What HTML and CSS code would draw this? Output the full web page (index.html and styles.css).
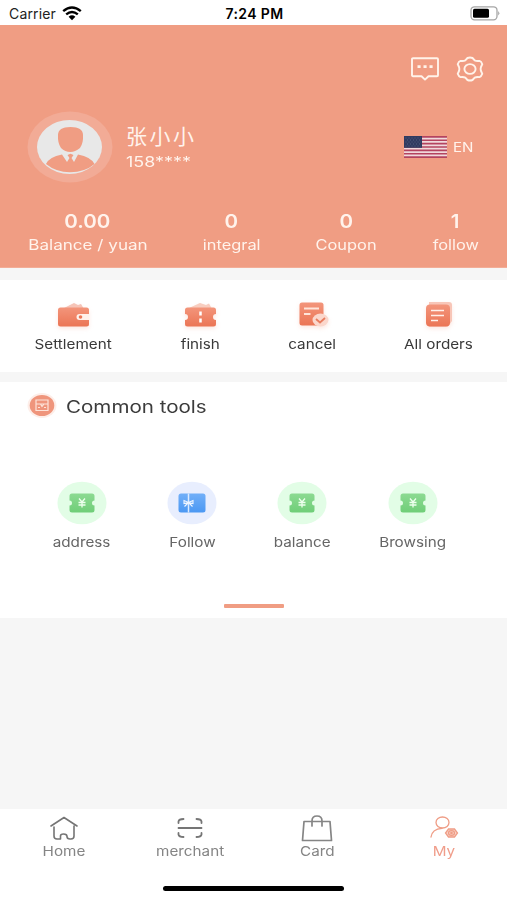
FILE: index.html
```html
<!DOCTYPE html>
<html lang="en">
<head>
<meta charset="utf-8">
<title>My</title>
<link rel="stylesheet" href="styles.css">
</head>
<body>
<svg class="defs" width="0" height="0" aria-hidden="true">
  <defs>
    <linearGradient id="coral" x1="0" y1="0" x2="0" y2="1"><stop offset="0" stop-color="#f3957b"/><stop offset="1" stop-color="#eb7555"/></linearGradient>
    <linearGradient id="green" x1="0" y1="0" x2="0" y2="1"><stop offset="0" stop-color="#8cda92"/><stop offset="1" stop-color="#6fce78"/></linearGradient>
    <linearGradient id="blue" x1="0" y1="0" x2="0" y2="1"><stop offset="0" stop-color="#71aff8"/><stop offset="1" stop-color="#4b98f3"/></linearGradient>
    <symbol id="coupon" viewBox="0 0 50 44">
      <ellipse cx="25" cy="22" rx="24.500" ry="21.300" fill="#e2fde6"/>
      <path d="M15 12.500H35Q37.500 12.500 37.500 15V19.500A2.500 2.500 0 0 0 37.500 24.500V29Q37.500 31.500 35 31.500H15Q12.500 31.500 12.500 29V24.500A2.500 2.500 0 0 0 12.500 19.500V15Q12.500 12.500 15 12.500Z" fill="url(#green)"/>
      <path d="M22 17.500L25 21L28 17.500M25 21V26.500M21.500 21.500H28.500M21.500 24H28.500" fill="none" stroke="#edffed" stroke-width="1.300"/>
    </symbol>
  </defs>
</svg>
<div class="screen">
  <div class="status">
    <div class="carrier"><span class="carrier-name">Carrier</span>
      <svg width="20" height="15" viewBox="0 0 20 15"><g fill="none" stroke="#000" stroke-width="2.500"><path d="M1.200 5.100Q10 -2.100 18.800 5.100"/><path d="M4.200 8.400Q10 3.700 15.800 8.400"/></g><path d="M6.600 10.700Q10 8 13.400 10.700L10 14.200Z"/></svg>
    </div>
    <span class="clock">7:24 PM</span>
    <svg class="battery" width="31" height="15" viewBox="0 0 31 15"><rect x="2" y=".8" width="26" height="13" rx="3.500" fill="#fff" stroke="#a5a5a5" stroke-width="1.300"/><rect x="4" y="2.800" width="16" height="9" rx="1.500"/><path d="M29.200 5Q31.500 7.300 29.200 9.500Z" fill="#a5a5a5"/></svg>
  </div>

  <header class="hero">
    <div class="actions">
      <svg width="28" height="24" viewBox="0 0 28 24" fill="none" stroke="#fff3ea" stroke-width="1.900" stroke-linejoin="round"><path d="M2 1.200H26Q27 1.200 27 2.200V18.200Q27 19.200 26 19.200H17.500L14 22.600L10.500 19.200H2Q1 19.200 1 18.200V2.200Q1 1.200 2 1.200Z"/><path d="M6.500 9.700H9.600M12.500 9.700H15.600M18.500 9.700H21.600" stroke-width="2.700"/></svg>
      <svg width="28" height="26" viewBox="0 0 28 26" fill="none" stroke="#fff3ea" stroke-width="1.900" stroke-linejoin="round"><path d="M11.500 2Q14 1 16.500 2L18.700 4.400Q20.500 5.300 23.500 4.900Q25.300 5.400 26.300 8.200L25 11Q24.300 13 25 15L26.300 17.800Q25.300 20.600 23.500 21.100Q20.500 20.700 18.700 21.600L16.500 24Q14 25 11.500 24L9.300 21.600Q7.500 20.700 4.500 21.100Q2.700 20.600 1.700 17.800L3 15Q3.700 13 3 11L1.700 8.200Q2.700 5.400 4.500 4.900Q7.500 5.300 9.300 4.400Z"/><ellipse cx="14" cy="13" rx="5.600" ry="4.900"/></svg>
    </div>
    <div class="profile">
      <svg width="86" height="72" viewBox="0 0 86 72"><ellipse cx="43" cy="36" rx="42.500" ry="35.500" fill="#f2ab96"/><ellipse cx="42.500" cy="36" rx="32.500" ry="27" fill="#e8e8e8"/><path d="M31 24Q31 16 43.500 16Q56 16 56 24Q56.500 32 53 37Q48 41 43.500 41Q38 41 34 37Q30.500 32 31 24Z" fill="#f09d83"/><path d="M19 53Q22 46 35 43.500L40 51L42.500 47L40.500 44L43.500 42.800L46.500 44L44.500 47L47 51L51 43.500Q64 46 67.500 53Q58 61.200 43 61.200Q29 61.200 19 53Z" fill="#f09d83"/></svg>
      <div class="who"><div class="name">张小小</div><div class="phone"><span>158****</span></div></div>
      <div class="lang">
        <svg width="43" height="22" viewBox="0 0 43 22"><path fill="#f0d9dc" d="M0 0H43V22H0z"/><path d="M0 .850H43M0 4.240H43M0 7.620H43M0 11H43M0 14.380H43M0 17.770H43M0 21.150H43" stroke="#b44460" stroke-width="1.600"/><path fill="#303b61" d="M0 0H18V11.800H0z"/><path d="M1.500 2H17M3 4H16M1.500 6H17M3 8H16M1.500 10H17" stroke="#65708c" stroke-width=".7" stroke-dasharray="1 2"/></svg>
        <span>EN</span>
      </div>
    </div>
    <div class="stats">
      <div class="stat w-balance"><b>0.00</b><span>Balance / yuan</span></div>
      <div class="stat w-integral"><b>0</b><span>integral</span></div>
      <div class="stat w-coupon"><b>0</b><span>Coupon</span></div>
      <div class="stat w-follow"><b>1</b><span>follow</span></div>
    </div>
  </header>

  <section class="orders">
    <div class="order w-settle">
      <svg width="38" height="34" viewBox="0 0 38 34"><path d="M10 8L20 3L24 5L27 4L30 9Z" fill="#f6c4b7"/><rect x="4" y="7.500" width="31" height="19" rx="2.500" fill="url(#coral)"/><path d="M35 14H25.500Q22.500 14 22.500 17Q22.500 20 25.500 20H35Z" fill="#fff1eb"/><circle cx="26.500" cy="17" r="1.800" fill="#ec7959"/></svg>
      <span>Settlement</span></div>
    <div class="order w-finish">
      <svg width="38" height="34" viewBox="0 0 38 34"><path d="M8 8L19 3L25 5L28 3.500L31 9Z" fill="#f8cdbf"/><path d="M6.500 7.500H32.500Q35 7.500 35 10V14A3 3 0 0 0 35 20V24Q35 26.500 32.500 26.500H6.500Q4 26.500 4 24V20A3 3 0 0 0 4 14V10Q4 7.500 6.500 7.500Z" fill="url(#coral)"/><path d="M19.500 11.500V15.500M19.500 18.500V22.500" stroke="#fff" stroke-width="2.500"/></svg>
      <span>finish</span></div>
    <div class="order w-cancel">
      <svg width="38" height="34" viewBox="0 0 38 34"><rect x="6.500" y="2.500" width="24" height="23" rx="2.500" fill="url(#coral)"/><path d="M11 8.500H26M11 14H17.500" stroke="#ffe4d9" stroke-width="1.800"/><ellipse cx="27.500" cy="20" rx="8" ry="6.500" fill="#fbd7cc"/><path d="M23 19L27 22.500L32 18" fill="none" stroke="#e87c5f" stroke-width="1.800"/></svg>
      <span>cancel</span></div>
    <div class="order w-all">
      <svg width="38" height="34" viewBox="0 0 38 34"><path d="M10 2H30Q33 2 33 5V21L29 26.500H10Z" fill="#f8c6b8"/><rect x="7" y="4.500" width="24" height="22" rx="4" fill="url(#coral)"/><path d="M12 10.500H25M12 15.500H25M12 20.500H19" stroke="#fff0e9" stroke-width="1.700"/></svg>
      <span>All orders</span></div>
  </section>

  <section class="tools">
    <h2><svg width="30" height="28" viewBox="0 0 30 28"><ellipse cx="15" cy="13.500" rx="14.500" ry="12.500" fill="#fdeee9"/><ellipse cx="15" cy="13.500" rx="12.300" ry="10.500" fill="#ef957c"/><path d="M9 8H21V12H9ZM9 12V18.500H21V12M13.500 12L15 14.500L17 12M11 15.500H13M17 15.500H19" fill="none" stroke="#fde3d9" stroke-width="1.200"/></svg><span>Common tools</span></h2>
    <div class="tool-grid">
      <div class="tool address"><svg width="50" height="44"><use href="#coupon"/></svg><span>address</span></div>
      <div class="tool follow"><svg width="50" height="44" viewBox="0 0 50 44"><ellipse cx="25" cy="22" rx="24.500" ry="21.300" fill="#e8eefe"/><rect x="11.500" y="12.500" width="27" height="19" rx="2.500" fill="url(#blue)"/><path d="M21.500 12.500V31.500" stroke="#dcebff" stroke-width="1.500"/><path d="M21.500 21.500L17 19.500V22.500ZM21.500 21.500L26 19.500V22.500ZM21.500 21.500L17.500 25.500M21.500 21.500L25.500 25.500" fill="none" stroke="#eef5ff" stroke-width="1.100"/></svg><span>Follow</span></div>
      <div class="tool balance"><svg width="50" height="44"><use href="#coupon"/></svg><span>balance</span></div>
      <div class="tool browsing"><svg width="50" height="44"><use href="#coupon"/></svg><span>Browsing</span></div>
    </div>
    <div class="indicator"></div>
  </section>

  <nav class="tabs">
    <div class="tab home"><svg width="30" height="28" viewBox="0 0 30 28" fill="none" stroke="#757575" stroke-width="1.600" stroke-linejoin="round" stroke-linecap="round"><path d="M2 11L15 2.500L28 11M5 12V21Q5 24 8 24H11.500V21Q11.500 19 14.500 19Q18 19 18 21.500Q18 24 21 24H22Q25 24 25 21V11"/></svg><span>Home</span></div>
    <div class="tab merchant"><svg width="30" height="28" viewBox="0 0 30 28" fill="none" stroke="#757575" stroke-width="1.800" stroke-linecap="round"><path d="M3.500 8V6.500Q4 4 8.500 4M21.500 4Q26 4 26.500 6.500V8M3.500 18V19.500Q4 22 8.500 22M21.500 22Q26 22 26.500 19.500V18M3.500 13H26.500"/></svg><span>merchant</span></div>
    <div class="tab card"><svg width="32" height="28" viewBox="0 0 32 28" fill="none" stroke="#858585" stroke-width="1.700" stroke-linejoin="round" stroke-linecap="round"><path d="M3 6.500H29L30.500 25.500H1.500ZM11 11V6Q11 1 16 1Q21 1 21 6V11"/></svg><span>Card</span></div>
    <div class="tab my"><svg width="30" height="28" viewBox="0 0 30 28" fill="none" stroke="#ef9d86" stroke-width="1.300" stroke-linecap="round"><ellipse cx="13.500" cy="7.500" rx="6.500" ry="5.500"/><path d="M2 22Q3 14 13 13.300"/><path d="M19.500 14H25.500L28.500 18L25.500 22H19.500L16.500 18Z" fill="#f9d3c8"/><ellipse cx="22.500" cy="18" rx="3" ry="2.400"/><circle cx="22.500" cy="18" r=".7"/></svg><span>My</span></div>
  </nav>
  <div class="home-indicator"></div>
</div>
</body>
</html>
```
FILE: styles.css
```css
* { box-sizing: border-box; }
body { margin: 0; font-family: Inter, "Noto Sans CJK SC", sans-serif; background: #f6f6f6; }
svg { display: block; flex: none; }
.defs { position: absolute; }
.screen { width: 507px; height: 900px; display: flex; flex-direction: column; overflow: hidden; }
.screen span, .stat b, .name { white-space: nowrap; }

.status { height: 25px; flex: none; background: #fff; display: grid; grid-template-columns: 1fr auto 1fr; align-items: center; padding: 2px 7px 0 9px; font-size: 14px; line-height: 22px; }
.carrier { display: flex; align-items: center; gap: 6px; color: #222; }
.carrier-name { letter-spacing: .15px; }
.clock { font-weight: 600; letter-spacing: .4px; }
.battery { justify-self: end; }

.hero { height: 243px; flex: none; background: #f09d83; color: #fff3ec; padding-top: 31px; border-bottom: 1px solid #f3ad97; }
.actions { display: flex; justify-content: flex-end; align-items: center; gap: 17px; height: 26px; padding-right: 23px; }
.profile { display: flex; align-items: center; height: 72px; margin-top: 29px; padding: 0 36px 0 27px; }
.who { margin-left: 13px; flex: 1; padding-top: 1px; }
.name { font-size: 21px; line-height: 27px; font-weight: 400; letter-spacing: 2.5px; }
.phone { font-size: 14px; line-height: 23px; }
.phone span { display: inline-block; transform: scaleX(1.28); transform-origin: left; }
.lang { display: flex; align-items: center; gap: 6px; font-size: 13.500px; line-height: 20px; }
.lang span { display: inline-block; transform: scaleX(1.12); transform-origin: left; }
.stats { display: flex; justify-content: space-between; margin: 26px 28px 0; }
.stat { display: flex; flex-direction: column; align-items: center; }
.stat b { font-size: 19px; line-height: 25px; font-weight: 600; transform: scaleX(1.08); }
.stat span { font-size: 14px; line-height: 22px; transform: scaleX(1.17); }
.w-balance { width: 119px; }
.w-balance span { transform: scaleX(1.22); }
.w-integral { width: 58px; }
.w-coupon { width: 61px; }
.w-follow { width: 47px; }

.orders { height: 92px; flex: none; margin-top: 12px; background: #fff; display: flex; justify-content: space-between; padding: 20px 34px 0; }
.order { display: flex; flex-direction: column; align-items: center; font-size: 13.500px; line-height: 20px; color: #393939; }
.order svg { filter: drop-shadow(0 2px 2px #f5b7a455); }
.order span { transform: scaleX(1.13); }
.w-settle { width: 78px; }
.w-finish { width: 39px; }
.w-cancel { width: 47px; }
.w-all { width: 69px; }

.tools { height: 236px; flex: none; margin-top: 10px; background: #fff; padding-top: 10px; }
.tools h2 { margin: 0 0 0 27px; height: 28px; display: flex; align-items: center; gap: 9px; font-size: 17px; font-weight: 400; color: #3c3c3c; }
.tools h2 span { padding-top: 1px; transform: scaleX(1.21); transform-origin: left; }
.tool-grid { display: grid; grid-template-columns: repeat(4, 110.400px); margin: 61px 0 0 26.500px; }
.tool { display: flex; flex-direction: column; align-items: center; color: #666; font-size: 13.500px; line-height: 20px; gap: 7px; }
.tool span { transform: scaleX(1.13); }
.indicator { width: 60px; height: 4px; border-radius: 1px; background: #f09d83; margin: 52px 0 0 224px; }

.tabs { height: 63px; flex: none; margin-top: auto; background: #fff; display: grid; grid-template-columns: repeat(4, 1fr); padding-top: 6px; }
.tab { display: flex; flex-direction: column; align-items: center; font-size: 13.500px; line-height: 16px; color: #858585; }
.tab span { transform: scaleX(1.13); }
.tab.home { padding-left: 1px; }
.tab.my { color: #f09d8a; }
.home-indicator { height: 28px; flex: none; background: #fff; display: flex; justify-content: center; padding-top: 14px; }
.home-indicator::before { content: ""; width: 181px; height: 5px; border-radius: 3px; background: #000; }
```
